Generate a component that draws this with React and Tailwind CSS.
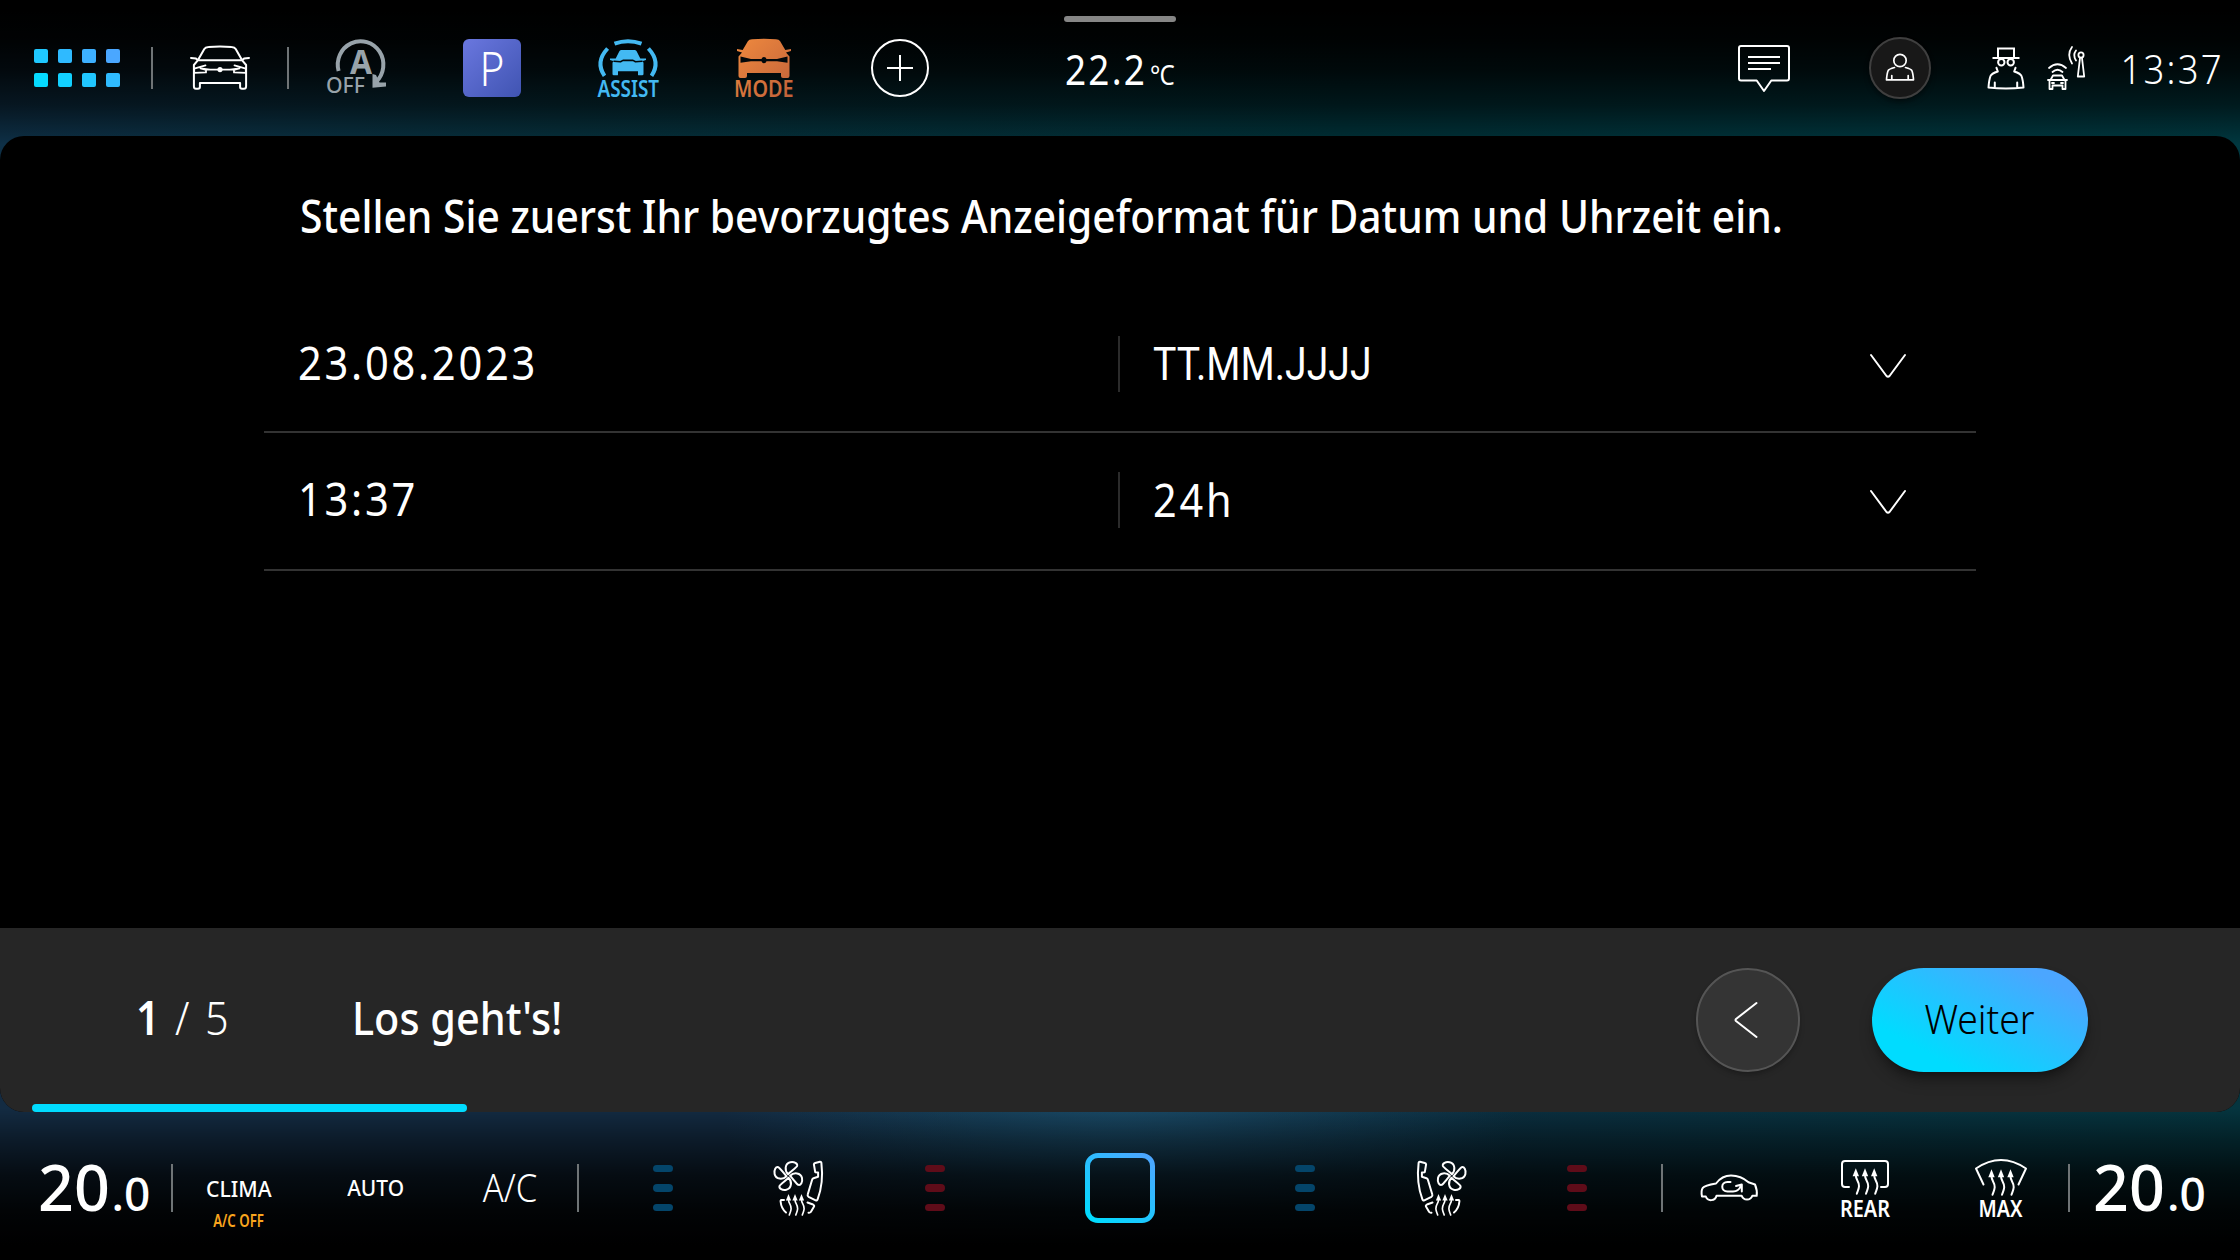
const cx = (...c) => c.filter(Boolean).join(" ");

/* Condensed text: glyphs are narrowed horizontally, kept on one line */
function T({ className = "", children }) {
  return <span className={cx("inline-block whitespace-nowrap leading-none", className)}>{children}</span>;
}

function Slot({ className = "w-[136px]", children }) {
  return <div className={cx("flex shrink-0 items-center justify-center", className)}>{children}</div>;
}

function Divider({ className = "h-12" }) {
  return <div className={cx("-mr-[2px] w-[2px] shrink-0 self-center bg-[#6f7476]", className)} />;
}

function Line({ w, h, className, sw = 2, children }) {
  return (
    <svg width={w} height={h} viewBox={`0 0 ${w} ${h}`} fill="none" stroke="currentColor" strokeWidth={sw} strokeLinecap="round" strokeLinejoin="round" className={cx("shrink-0 overflow-visible", className)}>
      {children}
    </svg>
  );
}

function Label({ x, y, len, size = 22, weight = 500, children, fill = "currentColor" }) {
  return (
    <text x={x} y={y} textLength={len} lengthAdjust="spacingAndGlyphs" fontSize={size} fontWeight={weight} fill={fill} stroke="none">
      {children}
    </text>
  );
}

function AppsGrid() {
  const c = ["bg-[#1fc8ff]", "bg-[#2fbaff]", "bg-[#3db0ff]", "bg-[#4aa7ff]", "bg-[#05daff]", "bg-[#12d0ff]", "bg-[#20c6ff]", "bg-[#2fbbff]"];
  return (
    <div className="grid grid-cols-4 gap-[10px]">
      {c.map((k) => <div key={k} className={cx("size-[14px] rounded-[2px]", k)} />)}
    </div>
  );
}

function CarIcon() {
  return (
    <Line w={60} h={46}>
      <path d="M8 15 14.3 4Q15.3 2.2 18.5 2.1 30 1.1 41.5 2.1 44.7 2.2 45.7 4L52 15" />
      <path d="M8 15.2H52M8 15.2 6 13.6 1 12.9M8 15.2 3.9 20V41.2Q3.9 43.8 6 43.8H8Q9.9 43.8 9.9 42V38.1H50.1V42Q50.1 43.8 52 43.8H54Q56.1 43.8 56.1 41.2V20L52 15.2 54 13.6 59 12.9" />
      <path d="M15.500 20.300 4.200 23.600V27.900L16 27.400V24.800L10.500 23.400 20 24.700H40L49.500 23.400 44 24.800V27.400L55.800 27.900V23.600L44.500 20.300" strokeWidth="1.8" />
      <circle cx="30" cy="24.6" r="2.6" fill="currentColor" stroke="none" />
    </Line>
  );
}

function StartStopIcon() {
  return (
    <Line w={60} h={58} className="text-[#98a3aa]">
      <path d="M12.600 32A22.800 23.500 0 1 1 50 43" strokeWidth="4" strokeLinecap="butt" />
      <path d="M46.500 35V48.700L60 47.500V43.500L53.500 43.500 50 36Z" fill="currentColor" stroke="none" />
      <Label x={24} y={34.500} len={22} size={34} weight={700}>A</Label>
      <Label x={0} y={54} len={39} weight={500}>OFF</Label>
    </Line>
  );
}

function AssistIcon() {
  return (
    <Line w={62} h={60} className="text-[#43b9f2]">
      <path d="M17.500 5.700Q31 .8 44.500 5.700M10.600 10.500Q-2 24 7.500 37.800M51.400 10.500Q64 24 54.500 37.800" strokeWidth="4" strokeLinecap="butt" />
      <path d="M22.500 13Q23.200 12 24.500 12H37.500Q38.800 12 39.500 13L43.300 20.500 49 20.500V22L45.800 23 46.500 25V36Q46.500 37.300 45.200 37.300H41.800Q41 37.300 41 36.400V33.200H21V36.400Q21 37.300 20.200 37.300H16.800Q15.500 37.300 15.500 36V25L16.200 23 13 22V20.500L18.700 20.500Z" fill="currentColor" stroke="none" />
      <path d="M17 23.300 23.500 23.800 26 22.400H36L38.500 23.800 45 23.300" stroke="#01080b" strokeWidth="1.6" />
      <Label x={0.5} y={59} len={61.5} size={23} weight={600}>ASSIST</Label>
    </Line>
  );
}

function ModeIcon() {
  return (
    <Line w={58} h={60}>
      <defs>
        <linearGradient id="mode" x1="0" y1="0" x2="58" y2="60" gradientUnits="userSpaceOnUse">
          <stop stopColor="#f08a3e" />
          <stop offset="1" stopColor="#c0613a" />
        </linearGradient>
      </defs>
      <path d="M13 3Q14 1.300 17 1.200 29 .3 41 1.200 44 1.300 45 3L50.300 12 56 11V13L51 14.500 54.500 18.500V38Q54.500 40 52.500 40H48Q46 40 46 38V35H12V38Q12 40 10 40H5.500Q3.500 40 3.500 38V18.500L7 14.500 2 13V11L7.700 12Z" fill="url(#mode)" stroke="none" />
      <path d="M5.500 18.500 16 21H26.500A2.600 2.600 0 0 1 31.500 21H42L52.500 18.500V24.700L42 23.300H31.500A2.600 2.600 0 0 1 26.500 23.300H16L5.500 24.700Z" fill="#01080b" stroke="none" />
      <Label x={-1} y={59} len={59.5} size={23} weight={600} fill="url(#mode)">MODE</Label>
    </Line>
  );
}

function MessageIcon() {
  return (
    <Line w={54} h={48}>
      <path d="M4 2H50Q52 2 52 4V34.500Q52 36.500 50 36.500H34.300L27 47 19.700 36.500H4Q2 36.500 2 34.500V4Q2 2 4 2Z" />
      <path d="M11 13H43M11 19H43M11 25H34" strokeLinecap="butt" />
    </Line>
  );
}

function UserIcon() {
  return (
    <Line w={30} h={30} sw={1.7}>
      <circle cx="15" cy="7.5" r="6.2" />
      <path d="M9.500 14.500Q4 16 3.200 17.500 2 20 1.500 26.800H28.500Q28 20 26.800 17.500 26 16 20.500 14.500M6.800 26.500V22.500M23.200 26.500V22.500" />
    </Line>
  );
}

function SpyIcon() {
  return (
    <Line w={40} h={44}>
      <path d="M12 12V2.500H28V12M6.500 12H33.500" strokeLinecap="butt" strokeLinejoin="miter" />
      <circle cx="15.3" cy="16.2" r="3.2" />
      <circle cx="24.7" cy="16.2" r="3.2" />
      <path d="M10.500 21.800 11.800 25.500Q5.500 27.500 4.500 30 3 34 2.500 41.500 20 43.300 37.500 41.500 37 34 35.500 30 34.500 27.500 28.200 25.500L29.500 21.800M8.800 41V36.500M31.200 41V36.500" />
    </Line>
  );
}

function AntennaIcon() {
  return (
    <Line w={38} h={44} sw={1.8}>
      <path d="M2 22Q10.500 14.500 19 22M5.500 26Q10.500 21.500 15.500 26" />
      <path d="M6 29.500H15L17.500 34H3.500ZM1 34H20M2.500 34.500V43H5.500V39.500H15.500V43H18.500V34.500M5 37H7M14 37H16" />
      <circle cx="34" cy="9" r="2.6" />
      <path d="M33 12 30.800 30.500H37.200L35 12M29 4.500Q25.500 9 29 14.500M25 1Q19.500 8.500 25 17.500" />
    </Line>
  );
}

/* Wavy heat arrow pointing up; x is its axis, y the tip */
function Heat({ x, y, s = 1 }) {
  return (
    <g transform={`translate(${x} ${y}) scale(${s})`}>
      <path d="M0 7C0 12 3.400 12.500 3.200 18 3 21 2 22.500 1 25.500" strokeWidth="2" />
      <path d="M0 0 3.200 8H-3.200Z" fill="currentColor" stroke="none" />
    </g>
  );
}

function SeatIcon({ className }) {
  const blade = "M-.2-1.800C-4-5.500-3.500-12.500 2-13.700 6-14.500 9.500-12.500 8.800-10 8.300-8.500 2.500-4.500-.2-1.800Z";
  return (
    <Line w={54} h={58} className={className} sw={2}>
      {[0, 90, 180, 270].map((r) => <path key={r} d={blade} transform={`translate(16.3 17) rotate(${r})`} />)}
      <path d="M41.900 5.300Q42 4.300 43.200 4L48 2.700Q49.200 2.500 49.400 4 51.800 24 45.600 40.300 45.200 41.900 43.700 41.300L36.600 37.800Q35.200 37 35.700 35.500L40.200 20.500Q40.500 19.500 41.500 19.200L46.100 17.800V13.400L43.200 13.200Z" />
      <path d="M35.500 43.500 41 45.500Q42.800 46.500 41.900 47.800L38.800 53Q38 54 36.500 53.700M12 41H9.300Q8.500 41 8.600 42.500 9.200 49.500 14 53.500" />
      <Heat x={16.5} y={35} s={0.82} />
      <Heat x={23} y={35} s={0.82} />
      <Heat x={29.5} y={35} s={0.82} />
    </Line>
  );
}

function RecircIcon() {
  return (
    <Line w={58} h={30}>
      <path d="M5.800 23.500H2Q.8 17.500 2.800 14.800 4.500 12.500 16 10.500 22 2.500 31 2.500 41 2.500 48.500 9.300L55 11.500Q57.500 17.500 56.700 22.800H52.300A5.600 5.600 0 0 1 41.700 22.800H16.500A5.600 5.600 0 0 1 5.800 23.500" />
      <path d="M30.500 9H27.500C20.500 9 20.500 18.500 27.500 18.500H33C37.500 18.500 39.500 16.500 41 12.500M36 13 41.800 11.500V18.500" />
    </Line>
  );
}

function RearIcon() {
  return (
    <Line w={50} h={58}>
      <path d="M9 28H5Q2 28 2 25V5Q2 2 5 2H45Q48 2 48 5V25Q48 28 45 28H41" />
      <Heat x={15.8} y={9.3} />
      <Heat x={25} y={9.3} />
      <Heat x={34.2} y={9.3} />
      <Label x={0} y={57.5} len={50} size={23} weight={600}>REAR</Label>
    </Line>
  );
}

function MaxIcon() {
  return (
    <Line w={54} h={60}>
      <path d="M9.500 26.500 2 10.500Q27-6.500 52 10.500L44.500 26.500" />
      <Heat x={17.5} y={11.3} />
      <Heat x={27} y={11.3} />
      <Heat x={36.5} y={11.3} />
      <Label x={4.5} y={58.500} len={44} size={23} weight={600}>MAX</Label>
    </Line>
  );
}

function Levels({ color }) {
  return (
    <div className="flex flex-col gap-3">
      {[0, 1, 2].map((i) => <div key={i} className={cx("h-[7.5px] w-5 rounded-full", color)} />)}
    </div>
  );
}

function Temperature() {
  return (
    <div className="flex items-baseline leading-none font-medium whitespace-nowrap">
      <span className="inline-block w-[74px] origin-left scale-x-[.98] text-[64px] leading-none">20</span>
      <span className="inline-block w-[40px] origin-left text-[46px] leading-none">.0</span>
    </div>
  );
}

function TopBar() {
  return (
    <header className="flex h-[136px] shrink-0 text-white">
      <Slot className="w-[152px] pl-[2px]"><AppsGrid /></Slot>
      <div className="flex">
        <Divider className="-ml-px mr-[-1px] h-[42px]" />
        <Slot><CarIcon /></Slot>
        <Divider className="-ml-px mr-[-1px] h-[42px]" />
        <Slot><StartStopIcon /></Slot>
        <Slot>
          <div className="flex h-[58px] w-[58px] items-center justify-center rounded-[6px] bg-linear-to-br from-[#6a77df] to-[#4054b2]">
            <T className="scale-x-[.9] text-[47px] font-light">P</T>
          </div>
        </Slot>
        <Slot><AssistIcon /></Slot>
        <Slot><ModeIcon /></Slot>
        <Slot>
          <Line w={58} h={58} sw={2}>
            <circle cx="29" cy="29" r="28" />
            <path d="M29 16V42M16 29H42" strokeLinecap="butt" />
          </Line>
        </Slot>
      </div>
      <div className="flex w-[304px] flex-col items-center pt-4">
        <div className="h-[6px] w-28 rounded-full bg-[#868686]" />
        <div className="flex items-baseline pt-[27px]">
          <T className="w-[85px] origin-left scale-x-[.9] text-[41px] tracking-[2.5px]">22.2</T>
          <T className="w-[25px] origin-left scale-x-[.86] text-[28px] tracking-[-1px]">°C</T>
        </div>
      </div>
      <div className="ml-auto flex">
        <Slot><MessageIcon /></Slot>
        <Slot>
          <div className="flex size-[62px] items-center justify-center rounded-full border-2 border-[#3f3f3f] bg-[#181818] shadow-md shadow-black/40">
            <UserIcon />
          </div>
        </Slot>
        <Slot className="w-[136px] gap-[21px] pr-[2px]"><SpyIcon /><AntennaIcon /></Slot>
        <Slot className="w-[136px] pl-px"><T className="scale-x-[.89] text-[41px] font-light tracking-[2.5px]">13:37</T></Slot>
      </div>
    </header>
  );
}

function Row({ left, right, className, rightClass }) {
  return (
    <div className={cx("flex h-[138px] items-center border-b-2 border-[#333] pl-[34px]", className)}>
      <div className="w-[820px] pb-[3px]">
        <T className="origin-left scale-x-[.905] text-[46px] tracking-[3px]">{left}</T>
      </div>
      <div className="h-14 w-[2px] bg-[#2b2b2b]" />
      <div className="w-[750px] pl-[33px]">
        <T className={cx("origin-left text-[46px]", rightClass)}>{right}</T>
      </div>
      <Line w={36} h={24} className="mt-[3px]"><path d="M1 1 16.500 22Q18 23.500 19.500 22L35 1" /></Line>
    </div>
  );
}

function Panel() {
  return (
    <main className="flex h-[976px] shrink-0 flex-col overflow-hidden rounded-3xl bg-black text-white">
      <h1 className="mt-[56px] h-[46px] pl-[300px]">
        <T className="origin-left scale-x-[.886] text-[46px] font-medium">Stellen Sie zuerst Ihr bevorzugtes Anzeigeformat für Datum und Uhrzeit ein.</T>
      </h1>
      <div className="mx-[264px] mt-[57px]">
        <Row left="23.08.2023" right="TT.MM.JJJJ" className="pt-[2px]" rightClass="font-['Roboto'] scale-x-[.852]" />
        <Row left="13:37" right="24h" className="pb-[2px]" rightClass="mb-[3px] scale-x-[.9] tracking-[3.1px]" />
      </div>
      <footer className="mt-auto flex h-[184px] flex-col bg-[#262626]">
        <div className="flex flex-1 items-center pt-2">
          <div className="flex w-[352px] items-center pb-[7px] pl-[136px] text-[46px]">
            <T className="w-[39px] origin-left scale-x-[.9] font-semibold">1</T>
            <T className="w-[30px] origin-left scale-x-[.9] font-light">/</T>
            <T className="origin-left scale-x-[.9] font-light">5</T>
          </div>
          <T className="mb-[7px] origin-left scale-x-[.9] text-[46px] font-medium">Los geht's!</T>
          <button className="ml-auto flex size-[104px] items-center justify-center rounded-full border-2 border-[#555] bg-[#343434] shadow-md shadow-black/20">
            <Line w={24} h={36} className="-ml-1"><path d="M22.500 1 2 17Q1 18 2 19L22.500 35" /></Line>
          </button>
          <button className="mr-[152px] ml-[72px] flex h-[104px] w-[216px] items-center justify-center rounded-full bg-[linear-gradient(28deg,#00dcff_22%,#4ba6ff_85%)] pr-px pb-1 text-black shadow-lg shadow-black/40">
            <T className="scale-x-[.91] text-[41px] font-light">Weiter</T>
          </button>
        </div>
        <div className="ml-8 h-2 w-[435px] rounded-full bg-[#00dcff]" />
      </footer>
    </main>
  );
}

function ClimateBar() {
  return (
    <nav className="flex h-[148px] shrink-0 text-white">
      <Slot className="w-[171px] pt-[2px] pl-[18px]"><Temperature /></Slot>
      <Divider className="mt-1 h-12" />
      <Slot>
        <div className="flex flex-col items-center pt-[35px]">
          <T className="scale-x-[.94] text-[22.5px] font-medium">CLIMA</T>
          <T className="mt-[12px] scale-x-[.78] text-[17px] font-semibold text-[#f9a51d]">A/C OFF</T>
        </div>
      </Slot>
      <Slot><T className="mt-[5px] ml-[2px] scale-x-[.93] text-[22.5px] font-medium">AUTO</T></Slot>
      <Slot className="w-[134px]"><T className="mt-px scale-x-[.91] text-[38px] font-[350]">A/C</T></Slot>
      <Divider className="mt-1 h-12" />
      <div className="flex pt-1 pl-[18px]">
        <Slot><Levels color="bg-[#04456a]" /></Slot>
        <Slot><SeatIcon /></Slot>
        <Slot><Levels color="bg-[#5f0c19]" /></Slot>
        <Slot className="w-[234px]">
          <Line w={70} h={70} sw={5}>
            <defs>
              <linearGradient id="home" x1="10" y1="70" x2="60" y2="0" gradientUnits="userSpaceOnUse">
                <stop stopColor="#00dcff" />
                <stop offset="1" stopColor="#4da6ff" />
              </linearGradient>
            </defs>
            <rect x="2.5" y="2.5" width="65" height="65" rx="10.5" stroke="url(#home)" />
          </Line>
        </Slot>
        <Slot><Levels color="bg-[#04456a]" /></Slot>
        <Slot><SeatIcon className="-scale-x-100" /></Slot>
        <Slot><Levels color="bg-[#5f0c19]" /></Slot>
      </div>
      <div className="w-4" />
      <Divider className="mt-1 h-12" />
      <Slot className="w-[136px] pt-1"><RecircIcon /></Slot>
      <Slot className="w-[136px] pt-1"><RearIcon /></Slot>
      <Slot className="w-[135px] pt-1 pl-px"><MaxIcon /></Slot>
      <Divider className="mt-1 h-12" />
      <Slot className="w-[172px] pt-[2px] pr-[8px]"><Temperature /></Slot>
    </nav>
  );
}

export default function App() {
  return (
    <div className="grid h-[1260px] w-[2240px] overflow-hidden bg-black font-['Noto_Sans',sans-serif]">
      <div className="col-start-1 row-start-1 flex flex-col">
        <div className="h-[180px] bg-[linear-gradient(to_bottom,#000_10px,#000000f2_40px,#000000d0_70px,#00000088_105px,#00000000_145px),linear-gradient(to_right,#0e3047,#06303c_25%,#003138_60%,#003840)]" />
        <div className="flex-1" />
        <div className="h-[180px] bg-[linear-gradient(to_top,#000_15px,#000000e8_50px,#000000b8_85px,#00000060_120px,#00000000_152px),radial-gradient(400px_300px_at_50%_0%,#1a4b68,#1b4c7000),linear-gradient(to_right,#132b42_35%,#0b2e3f_65%,#05353f)]" />
      </div>
      <div className="col-start-1 row-start-1 flex flex-col">
        <TopBar />
        <Panel />
        <ClimateBar />
      </div>
    </div>
  );
}
